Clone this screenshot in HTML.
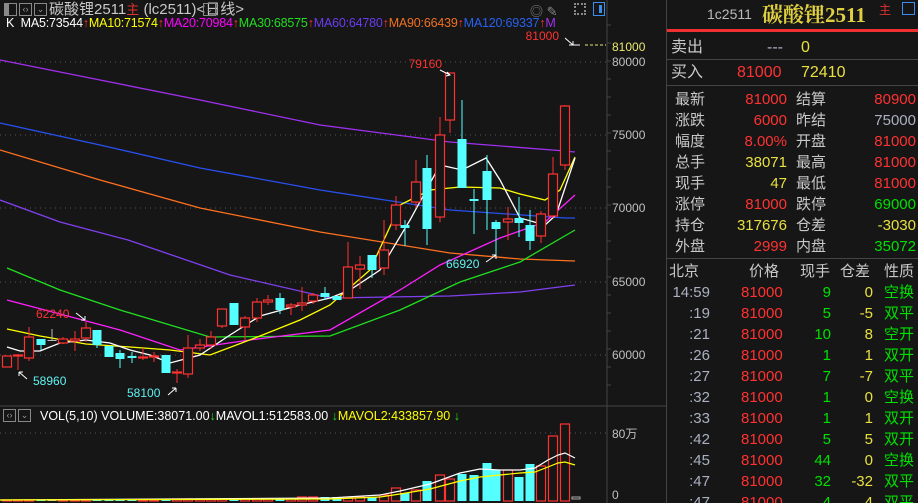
<!DOCTYPE html>
<html><head><meta charset="utf-8">
<style>
*{margin:0;padding:0;box-sizing:border-box}
body{width:918px;height:503px;background:#161616;overflow:hidden;font-family:"Liberation Sans","Noto Sans CJK SC",sans-serif;position:relative}
.abs{position:absolute;white-space:nowrap}
#rp{position:absolute;left:666px;top:0;width:252px;height:503px;border-left:1px solid #444;font-size:15px;overflow:hidden}
.row{position:absolute;left:0;width:252px;height:21px;line-height:21px}
.row span{position:absolute;top:0;line-height:21px;white-space:nowrap}
.c{color:#c8c8c8}.r{color:#ff3232}.y{color:#e8e040}.g{color:#00e000}.gr{color:#aab0c0}
</style></head><body>
<svg id="ch" width="666" height="503" style="position:absolute;left:0;top:0" xmlns="http://www.w3.org/2000/svg">
<rect x="0" y="0" width="666" height="503" fill="#161616"/>
<g stroke="#555" stroke-dasharray="1,4" stroke-width="1">
<line x1="0" y1="62" x2="606" y2="62"/><line x1="0" y1="135" x2="606" y2="135"/><line x1="0" y1="208" x2="606" y2="208"/><line x1="0" y1="282" x2="606" y2="282"/><line x1="0" y1="355" x2="606" y2="355"/><line x1="0" y1="433" x2="606" y2="433"/>
</g>
<line x1="607" y1="0" x2="607" y2="503" stroke="#444"/>
<line x1="0" y1="406" x2="666" y2="406" stroke="#444"/>
<g id="ticks" stroke="#444"></g>
<g fill="none" stroke-width="1.3">
<polyline stroke="#a030f0" points="0,60 100,80 200,100 320,125 450,142 565,151 575,152"/>
<polyline stroke="#2850f0" points="0,123 100,145 200,168 320,190 450,210 565,218 575,218"/>
<polyline stroke="#ff7020" points="0,150 100,180 200,208 320,232 450,253 520,259 575,261"/>
<polyline stroke="#8040f0" points="0,200 60,222 128,240 230,275 330,298 450,296 520,292 575,285"/>
<polyline stroke="#20e020" points="7,268 60,290 120,310 210,337 330,336 400,310 460,282 520,262 575,230"/>
<polyline stroke="#ff20ff" points="7,300 60,314 120,330 180,350 250,340 330,330 400,290 440,265 500,238 545,222 575,195"/>
<polyline stroke="#ffff00" points="7,329 40,336 86,344 130,347 170,350 210,355 260,336 300,320 330,305 370,270 400,205 430,190 460,187 500,188 520,194 545,200 560,190 575,157"/>
<polyline stroke="#ffffff" points="7,347 20,351 40,351 60,343 86,340 110,343 130,350 150,355 170,363 200,355 230,335 260,316 300,305 330,298 350,290 380,270 410,220 440,165 462,170 486,158 500,180 520,218 545,225 556,215 575,158"/>
</g>
<g id="cd"></g>
<g id="vol"></g>
<polyline fill="none" stroke="#fff" stroke-width="1.2" points="0,500 330,498 380,495 400,491 430,484 460,473 480,469 500,470 520,470 535,468 548,460 558,455 565,453 575,458"/>
<polyline fill="none" stroke="#ff0" stroke-width="1.2" points="0,500 330,499 380,497 400,494 430,489 460,481 480,477 500,475 520,473 535,472 548,467 558,463 565,462 575,465"/>
<g font-family="Liberation Sans" font-size="12">
<text x="442" y="68" fill="#ff3232" text-anchor="end">79160</text>
<text x="36" y="318" fill="#ff3232">62240</text>
<text x="33" y="385" fill="#60f0f0">58960</text>
<text x="127" y="397" fill="#60f0f0">58100</text>
<text x="446" y="268" fill="#60f0f0">66920</text>
<text x="559" y="40" fill="#ff3232" text-anchor="end">81000</text>
<text x="612" y="51" fill="#e8e870">81000</text>
<text x="612" y="66" fill="#c0c0c0">80000</text>
<text x="612" y="139" fill="#c0c0c0">75000</text>
<text x="612" y="212" fill="#c0c0c0">70000</text>
<text x="612" y="286" fill="#c0c0c0">65000</text>
<text x="612" y="359" fill="#c0c0c0">60000</text>
<text x="612" y="438" fill="#c0c0c0">80万</text>
<text x="612" y="499" fill="#c0c0c0">0</text>
</g>
<g stroke="#fff" fill="none" stroke-width="1">
<path d="M440,70 L450,75 M447,72 L450,75 L446,76"/>
<path d="M19,372 L27,379 M19,372 L19,376 M19,372 L23,372"/>
<path d="M76,313 L85,320 M85,320 L85,316 M85,320 L81,320"/>
<path d="M168,395 L176,388 M176,388 L172,388 M176,388 L176,392"/>
<path d="M486,262 L496,255 M496,255 L492,255 M496,255 L496,259"/>
<path d="M565,38 L573,45 L580,45 M573,45 L569,45 M573,45 L573,41"/>
</g>
<line x1="585" y1="45" x2="606" y2="45" stroke="#e8e870" stroke-dasharray="3,2"/>
</svg>

<div class="abs" style="left:4px;top:3px;width:13px;height:13px;border:1px solid #888"><div style="width:4px;height:11px;background:#888"></div></div>
<div class="abs" style="left:19px;top:3px;width:13px;height:13px;border:1px solid #888;color:#999;font-size:9px;line-height:11px;text-align:center">‹›</div>
<div class="abs" style="left:34px;top:3px;width:13px;height:13px;border:1px solid #888;color:#999;font-size:9px;line-height:11px;text-align:center">⌄</div>
<div class="abs" style="left:49px;top:0px;font-size:15px;line-height:19px;color:#c8c8c8">碳酸锂2511<span style="color:#e03030;font-size:13px">主</span> (lc2511)&lt;日线&gt;</div>
<div class="abs" style="left:203px;top:3px;width:13px;height:13px;border:1px solid #888;color:#999;font-size:9px;line-height:11px;text-align:center">⌄</div>
<div class="abs" style="left:530px;top:1px;color:#888;font-size:13px">◎ ✎</div>
<div class="abs" style="left:574px;top:3px;width:12px;height:12px;border:2px dotted #888"></div>
<div class="abs" style="left:593px;top:2px;width:12px;height:14px;border:1px solid #3a8ef0"><div style="margin:2px 0 0 5px;width:3px;height:8px;background:#3a8ef0"></div></div>
<div class="abs" style="left:6px;top:15px;font-size:12.5px;line-height:16px;letter-spacing:-0.2px"><span style="color:#fff">K&nbsp; MA5:73544</span><span style="color:#f33">↑</span><span style="color:#ff0">MA10:71574</span><span style="color:#f33">↑</span><span style="color:#f0f">MA20:70984</span><span style="color:#f33">↑</span><span style="color:#2d2">MA30:68575</span><span style="color:#f33">↑</span><span style="color:#6a3cf0">MA60:64780</span><span style="color:#f33">↑</span><span style="color:#f07020">MA90:66439</span><span style="color:#f33">↑</span><span style="color:#2860f0">MA120:69337</span><span style="color:#f33">↑</span><span style="color:#a030f0">M</span></div>
<div class="abs" style="left:3px;top:409px;width:13px;height:13px;border:1px solid #888;color:#999;font-size:9px;line-height:11px;text-align:center">‹›</div>
<div class="abs" style="left:18px;top:409px;width:13px;height:13px;border:1px solid #888;color:#999;font-size:9px;line-height:11px;text-align:center">⌄</div>
<div class="abs" style="left:40px;top:408px;font-size:12.5px;line-height:16px;color:#fff">VOL(5,10) VOLUME:38071.00<span style="color:#2d2">↓</span>MAVOL1:512583.00 <span style="color:#2d2">↓</span><span style="color:#ff0">MAVOL2:433857.90 </span><span style="color:#2d2">↓</span></div>

<div id="rp">
<div class="abs" style="left:40px;top:5px;font-size:14px;line-height:18px;color:#bbb">1c2511</div>
<div class="abs" style="left:95px;top:2px;font-size:21px;line-height:26px;font-weight:bold;color:#e0d040;font-family:'Liberation Serif','Noto Serif CJK SC',serif">碳酸锂2511</div>
<div class="abs" style="left:212px;top:2px;font-size:12px;line-height:16px;color:#e03030">主</div>
<div class="abs" style="left:235px;top:2px;width:13px;height:13px;border:1px solid #3a8ef0"></div>
<div class="abs" style="left:0;top:29px;width:252px;height:3px;background:#f03030"></div>
<div class="row" style="top:36px;font-size:16px;height:24px"><span class="c" style="left:4px;line-height:24px">卖出</span><span class="gr" style="left:100px;line-height:24px">---</span><span class="y" style="left:134px;line-height:24px">0</span></div>
<div class="abs" style="left:0;top:59px;width:252px;height:1px;background:#444"></div>
<div class="row" style="top:61px;font-size:16px;height:24px"><span class="c" style="left:4px;line-height:24px">买入</span><span class="r" style="left:70px;line-height:24px">81000</span><span class="y" style="left:134px;line-height:24px">72410</span></div>
<div class="abs" style="left:0;top:85px;width:252px;height:1px;background:#444"></div>
<div id="q"></div>
<div class="abs" style="left:0;top:258px;width:252px;height:1px;background:#444"></div>
<div id="t"></div>
</div>
<script>
var C=[[7,356,356,367,367,'r'],[18,354,355,356,370,'r'],[29,327,337,358,361,'r'],[41,339,339,345,350,'c'],[52,329,340,341,341,'w'],[63,337,339,343,344,'r'],[75,331,339,341,351,'r'],[86,322,328,338,342,'r'],[97,330,330,345,348,'c'],[109,346,346,357,357,'c'],[120,350,353,359,368,'c'],[132,352,356,358,363,'c'],[143,348,357,358,360,'r'],[154,352,356,357,362,'r'],[166,355,355,373,373,'c'],[177,369,372,373,383,'r'],[188,335,348,374,378,'r'],[200,339,345,348,351,'r'],[211,331,337,345,349,'r'],[222,309,309,326,328,'r'],[234,303,303,325,325,'c'],[245,316,318,327,340,'r'],[257,298,302,318,322,'r'],[268,295,300,302,305,'r'],[280,293,298,310,314,'c'],[291,303,305,307,315,'r'],[302,287,303,305,311,'r'],[313,293,295,301,304,'r'],[325,287,293,297,300,'c'],[337,296,296,300,300,'c'],[348,242,267,298,298,'r'],[360,256,265,269,289,'r'],[372,255,255,270,278,'c'],[384,220,250,268,275,'r'],[396,196,205,225,230,'r'],[405,220,225,228,246,'c'],[416,160,182,202,208,'r'],[427,155,168,229,245,'c'],[440,117,135,217,222,'r'],[450,73,73,120,133,'r'],[462,100,139,188,188,'c'],[474,189,199,201,234,'c'],[487,155,171,200,230,'c'],[496,220,222,229,255,'c'],[508,207,219,222,240,'r'],[519,197,218,223,237,'c'],[530,210,225,241,250,'c'],[541,211,214,236,243,'r'],[553,157,174,216,218,'r'],[565,105,106,165,170,'r']];
var VT={384:495,396:488,405:493,416:490,427:481,440:475,450:479,462:474,474:475,487:463,496:470,508:470,519:477,530:464,541:466,553:436,565:424};
var s='',v='';
C.forEach(function(c,i){var x=c[0],col=c[5]=='r'?'#ff3232':(c[5]=='c'?'#55ffff':'#bbb');
s+='<line x1="'+x+'" y1="'+c[1]+'" x2="'+x+'" y2="'+c[4]+'" stroke="'+col+'"/>';
var h=Math.max(1,c[3]-c[2]);
if(c[5]=='r')s+='<rect x="'+(x-4.5)+'" y="'+c[2]+'" width="9" height="'+h+'" fill="#161616" stroke="'+col+'" stroke-width="1.2"/>';
else s+='<rect x="'+(x-4.5)+'" y="'+c[2]+'" width="9" height="'+h+'" fill="'+col+'"/>';
var vy=VT[x]||(x<160?500:(x<300?499:497));var vh=501-vy;
if(c[5]=='r')v+='<rect x="'+(x-4.5)+'" y="'+vy+'" width="9" height="'+vh+'" fill="#161616" stroke="#ff3232" stroke-width="1.2"/>';
else v+='<rect x="'+(x-4.5)+'" y="'+vy+'" width="9" height="'+vh+'" fill="'+col+'"/>';});
v+='<rect x="572" y="497" width="8" height="2" fill="none" stroke="#aaa"/>';
document.getElementById('cd').innerHTML=s;document.getElementById('vol').innerHTML=v;
var tk='';for(var y=25;y<400;y+=18)tk+='<line x1="607" y1="'+y+'" x2="611" y2="'+y+'"/>';document.getElementById('ticks').innerHTML=tk;
var Q=[['最新','81000','r','结算','80900','r'],['涨跌','6000','r','昨结','75000','gr'],['幅度','8.00%','r','开盘','81000','r'],['总手','38071','y','最高','81000','r'],['现手','47','y','最低','81000','r'],['涨停','81000','r','跌停','69000','g'],['持仓','317676','y','仓差','-3030','y'],['外盘','2999','r','内盘','35072','g']];
var q='';Q.forEach(function(r,i){q+='<div class="row" style="top:'+(89+i*21)+'px"><span class="c" style="left:8px">'+r[0]+'</span><span class="'+r[2]+'" style="right:132px">'+r[1]+'</span><span class="c" style="left:129px">'+r[3]+'</span><span class="'+r[5]+'" style="right:3px">'+r[4]+'</span></div>';});
document.getElementById('q').innerHTML=q;
var T=[['14:59','9','0','空换'],[':19','5','-5','双平'],[':21','10','8','空开'],[':26','1','1','双开'],[':27','7','-7','双平'],[':32','1','0','空换'],[':33','1','1','双开'],[':42','5','5','双开'],[':45','44','0','空换'],[':47','32','-32','双平'],[':47','4','4','双平']];
var t='<div class="row" style="top:261px"><span class="c" style="left:2px">北京</span><span class="c" style="left:82px">价格</span><span class="c" style="left:133px">现手</span><span class="c" style="left:173px">仓差</span><span class="c" style="left:217px">性质</span></div>';
T.forEach(function(r,i){t+='<div class="row" style="top:'+(282+i*21)+'px"><span class="gr" style="right:209px">'+r[0]+'</span><span class="r" style="left:74px">81000</span><span class="g" style="right:88px">'+r[1]+'</span><span class="y" style="right:46px">'+r[2]+'</span><span class="g" style="left:217px">'+r[3]+'</span></div>';});
document.getElementById('t').innerHTML=t;
</script>
</body></html>
